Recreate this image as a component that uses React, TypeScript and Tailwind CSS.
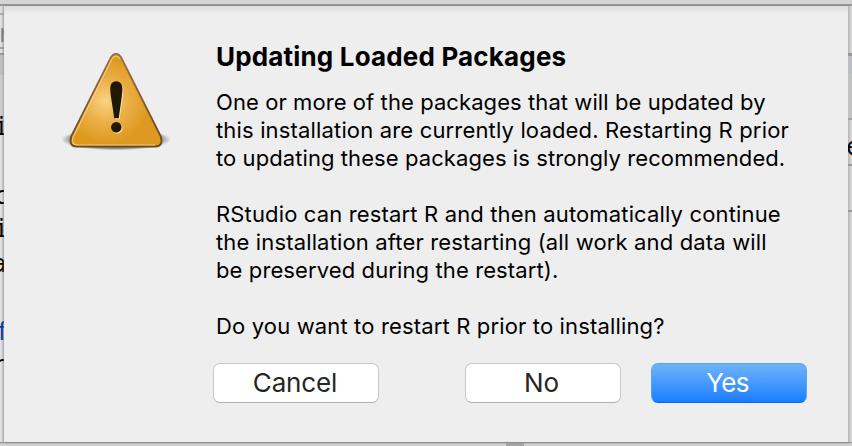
import React from "react";

const lines: { text: string; cls: string }[] = [
  { text: "One or more of the packages that will be updated by", cls: "tracking-[0.08px]" },
  { text: "this installation are currently loaded. Restarting R prior", cls: "tracking-[0.16px]" },
  { text: "to updating these packages is strongly recommended.", cls: "tracking-[0.08px]" },
  { text: "", cls: "" },
  { text: "RStudio can restart R and then automatically continue", cls: "tracking-[0.15px]" },
  { text: "the installation after restarting (all work and data will", cls: "tracking-[0.15px]" },
  { text: "be preserved during the restart).", cls: "tracking-[0.11px]" },
  { text: "", cls: "" },
  { text: "Do you want to restart R prior to installing?", cls: "tracking-[0.15px]" },
];

function WarningIcon() {
  return (
    <svg width="116" height="110" viewBox="58 46 116 110" className="block">
      <defs>
        <radialGradient id="amber" gradientUnits="userSpaceOnUse" cx="106" cy="101" r="42">
          <stop offset="0" stopColor="#fad383" />
          <stop offset="0.5" stopColor="#ecb04a" />
          <stop offset="1" stopColor="#de9a20" />
        </radialGradient>
        <linearGradient id="rim" x1="0" y1="0" x2="0" y2="1">
          <stop offset="0" stopColor="#94704a" />
          <stop offset="1" stopColor="#6b4a1c" />
        </linearGradient>
        <radialGradient id="ground">
          <stop offset="0" stopColor="#000" stopOpacity="0.75" />
          <stop offset="0.8" stopColor="#000" stopOpacity="0.42" />
          <stop offset="1" stopColor="#000" stopOpacity="0" />
        </radialGradient>
      </defs>
      <ellipse cx="116" cy="139.500" rx="55" ry="11" fill="url(#ground)" />
      <path
        d="M110.600 57.800 Q112.800 54 116 54 Q119.200 54 121.400 57.800 L160.800 136.500 Q163.500 146.500 155.500 146.500 H76.500 Q68.500 146.500 71.200 136.500 Z"
        fill="url(#amber)" stroke="url(#rim)" strokeWidth="1.800" strokeLinejoin="round"
      />
      <path d="M155 145 H77 Q71 144.500 73 137.500 L112 58.800 Q116 53.500 120 58.800" fill="none" stroke="#f8d797" strokeWidth="1.100" opacity="0.75" />
      <g transform="translate(1 1)" fill="#fbe6ba">
        <path d="M116 81.300 C120.500 81.300 122.600 85 122.200 90.500 C121.600 99 119.500 110 118.600 118.300 H113.900 C113.200 110 110.700 99 110.100 90.500 C109.700 85 111.500 81.300 116 81.300 Z" />
        <circle cx="116.300" cy="127.300" r="5.200" />
      </g>
      <path d="M116.200 81.300 C120.700 81.300 122.800 85 122.400 90.500 C121.800 99 119.700 110 118.800 118.300 H114.100 C113.400 110 110.900 99 110.300 90.500 C109.900 85 111.700 81.300 116.200 81.300 Z" fill="#211802" />
      <circle cx="116.300" cy="127.300" r="5.200" fill="#211802" />
    </svg>
  );
}

function Glyph({ children, cls }: { children: string; cls: string }) {
  return <span className={`absolute font-['DejaVu_Sans_Mono',monospace] text-[24px] leading-[28px] ${cls}`}>{children}</span>;
}

export default function App() {
  return (
    <div className="flex h-[446px] w-[852px] flex-col overflow-hidden bg-[#d6d6d6] font-['Inter',sans-serif]">
      <div className="h-[6px] shrink-0 border-b-2 border-[#989898] bg-[#d4d4d4]" />
      <div className="flex h-[436px] shrink-0">
        <div className="relative w-[4px] shrink-0 overflow-hidden bg-linear-to-r from-[#e6e6e6] to-[#c4c4c4]">
          <div className="h-[7px]" />
          <div className="h-[2px] bg-[#aeb0b4]" />
          <div className="h-[32px]" />
          <div className="h-[2px] bg-[#a0a0a4]" />
          <div className="h-[4px]" />
          <div className="h-[2px] bg-[#969696]" />
          <div className="h-[20px] bg-[#bfc0c3]" />
          <div className="h-[45px] bg-[#cacbcd]" />
          <div className="h-[2px] bg-[#a9a9b0]" />
          <Glyph cls="left-[-3px] top-[14px] text-[#808388]">r</Glyph>
          <Glyph cls="left-[-6px] top-[107px] text-black">i</Glyph>
          <Glyph cls="left-[-6px] top-[176px] text-black">c</Glyph>
          <Glyph cls="left-[-6px] top-[209px] text-black">i</Glyph>
          <Glyph cls="left-[-8px] top-[244px] text-black">a</Glyph>
          <Glyph cls="left-[-5px] top-[312px] text-[#06409b]">f</Glyph>
          <Glyph cls="left-[-8px] top-[345px] text-black">r</Glyph>
        </div>
        <div className="relative flex w-[844px] shrink-0 bg-[#eeeeee] bg-[linear-gradient(#dcdcdc,#eeeeee_8px)] shadow-[0_0_2px_#777]">
          <div className="w-[212px] shrink-0 pl-[54px] pt-[40px]">
            <WarningIcon />
          </div>
          <div className="flex flex-1 flex-col">
            <h1 className="mt-[37px] h-[28px] whitespace-nowrap text-[26px] font-bold leading-[28px] text-black">
              <span className="tracking-[0.17px]">Updating Loaded Packages</span>
            </h1>
            <div className="mt-[17px] text-[22px] leading-[28px] text-black">
              {lines.map((l, i) => (
                <div key={i} className="h-[28px] whitespace-nowrap">
                  <span className={l.cls}>{l.text}</span>
                </div>
              ))}
            </div>
            <div className="-ml-[3px] mt-[23px] flex text-[26px] leading-[38px] text-[#262626]">
              <button className="h-[40px] w-[166px] rounded-[7px] border border-[#c8c8c8] border-b-[#b0b0b0] bg-white pr-[2px] tracking-[-0.15px]">Cancel</button>
              <button className="ml-[86px] h-[40px] w-[156px] rounded-[7px] border border-[#c8c8c8] border-b-[#b0b0b0] bg-white pr-[3px] tracking-[-0.2px]">No</button>
              <button className="ml-[30px] h-[40px] w-[156px] rounded-[7px] border border-[#5aa6f5] border-b-[#0f62f5] bg-linear-to-b from-[#6cb3fa] to-[#167dff] pr-[3px] tracking-[-0.6px] text-white">Yes</button>
            </div>
          </div>
        </div>
        <div className="relative w-[4px] shrink-0 overflow-hidden bg-linear-to-r from-[#b5b5b5] to-[#dddddd]">
          <div className="h-[47px]" />
          <div className="h-[3px] bg-[#999999]" />
          <div className="h-[18px] bg-[#bcbdc2]" />
          <div className="h-[44px] bg-[#c2c2c2]" />
          <div className="h-[2px] bg-[#a2a2a2]" />
          <div className="h-[44px]" />
          <div className="h-[2px] bg-[#999999]" />
          <div className="h-[44px]" />
          <div className="h-[2px] bg-[#999999]" />
          <Glyph cls="left-[-2px] top-[127px] text-black">e</Glyph>
        </div>
      </div>
      <div className="flex h-[4px] shrink-0 border-t border-[#989898] bg-linear-to-b from-[#c0c0c0] to-[#d8d8d8]">
        <div className="ml-[506px] w-[18px] bg-[#a5a5a8]" />
      </div>
    </div>
  );
}
